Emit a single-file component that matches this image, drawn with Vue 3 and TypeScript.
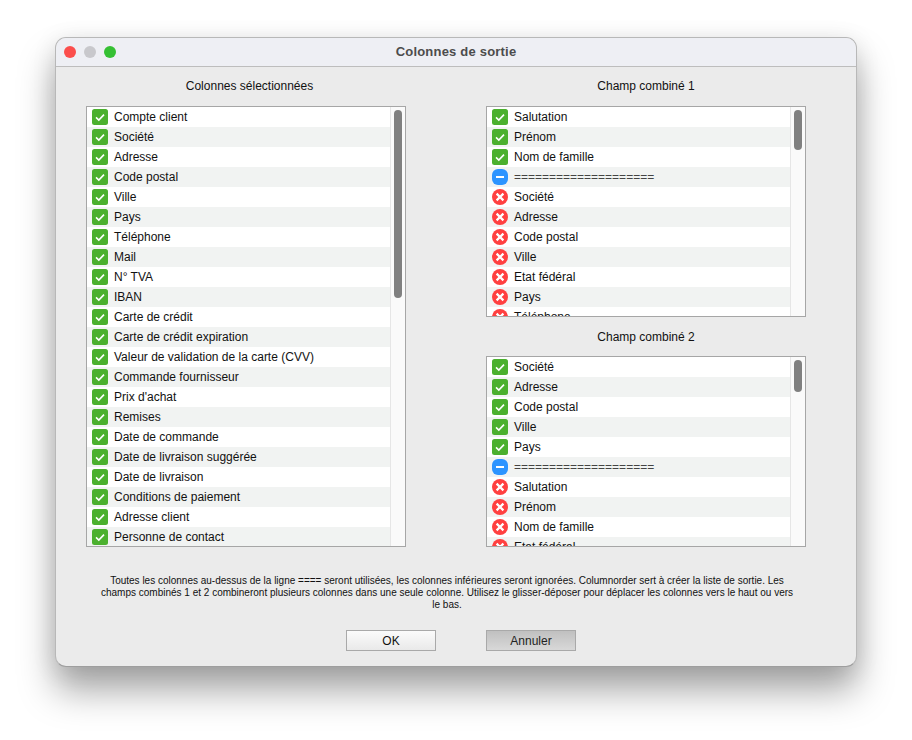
<script setup lang="ts">
type Kind = 'ok' | 'sep' | 'no'
interface Row { t: string; k: Kind }
const sep = '===================='
const mk = (k: Kind, items: string[]): Row[] => items.map((t) => ({ t, k }))
const left = mk('ok', ['Compte client', 'Société', 'Adresse', 'Code postal', 'Ville', 'Pays', 'Téléphone', 'Mail', 'N° TVA', 'IBAN', 'Carte de crédit', 'Carte de crédit expiration', 'Valeur de validation de la carte (CVV)', 'Commande fournisseur', "Prix d'achat", 'Remises', 'Date de commande', 'Date de livraison suggérée', 'Date de livraison', 'Conditions de paiement', 'Adresse client', 'Personne de contact'])
const c1 = [...mk('ok', ['Salutation', 'Prénom', 'Nom de famille']), { t: sep, k: 'sep' as Kind }, ...mk('no', ['Société', 'Adresse', 'Code postal', 'Ville', 'Etat fédéral', 'Pays', 'Téléphone'])]
const c2 = [...mk('ok', ['Société', 'Adresse', 'Code postal', 'Ville', 'Pays']), { t: sep, k: 'sep' as Kind }, ...mk('no', ['Salutation', 'Prénom', 'Nom de famille', 'Etat fédéral'])]
const lists = [
  { title: 'Champ combiné 1', rows: c1, cls: 'h1' },
  { title: 'Champ combiné 2', rows: c2, cls: 'h2' },
]
</script>

<template>
  <div class="page">
    <section class="win">
      <header class="bar">
        <div class="lights"><i class="r"></i><i class="g"></i><i class="v"></i></div>
        <h1>Colonnes de sortie</h1>
      </header>
      <main class="body">
        <div class="cols">
          <div class="col">
            <h2 class="lab shift">Colonnes sélectionnées</h2>
            <div class="list full">
              <div class="rows">
                <div v-for="r in left" :key="r.t" class="row">
                  <svg class="ic" viewBox="0 0 16 16"><rect width="16" height="16" rx="2.5" fill="#4bb02e"/><path d="M4 8.3l2.8 2.7L12 5.6" fill="none" stroke="#fff" stroke-width="1.6"/></svg>
                  <span>{{ r.t }}</span>
                </div>
              </div>
              <div class="track"><div class="thumb t-left"></div></div>
            </div>
          </div>
          <div class="col">
            <template v-for="l in lists" :key="l.title">
              <h2 class="lab" :class="l.cls === 'h2' ? 'second' : ''">{{ l.title }}</h2>
              <div class="list" :class="l.cls">
                <div class="rows">
                  <div v-for="r in l.rows" :key="r.t" class="row" :class="{ sep: r.k === 'sep' }">
                    <svg v-if="r.k === 'ok'" class="ic" viewBox="0 0 16 16"><rect width="16" height="16" rx="2.5" fill="#4bb02e"/><path d="M4 8.3l2.8 2.7L12 5.6" fill="none" stroke="#fff" stroke-width="1.6"/></svg>
                    <svg v-else-if="r.k === 'sep'" class="ic" viewBox="0 0 16 16"><rect width="16" height="16" rx="6" fill="#2c94ff"/><path d="M4 8h8" stroke="#fff" stroke-width="2"/></svg>
                    <svg v-else class="ic" viewBox="0 0 16 16"><circle cx="8" cy="8" r="8" fill="#ff4040"/><path d="M4.6 4.6l6.8 6.8M11.4 4.6l-6.8 6.8" stroke="#fff" stroke-width="2.2"/></svg>
                    <span>{{ r.t }}</span>
                  </div>
                </div>
                <div class="track"><div class="thumb" :class="l.cls === 'h1' ? 't-1' : 't-2'"></div></div>
              </div>
            </template>
          </div>
        </div>
        <p class="note">Toutes les colonnes au-dessus de la ligne ==== seront utilisées, les colonnes inférieures seront ignorées. Columnorder sert à créer la liste de sortie. Les champs combinés 1 et 2 combineront plusieurs colonnes dans une seule colonne. Utilisez le glisser-déposer pour déplacer les colonnes vers le haut ou vers le bas.</p>
        <div class="btns">
          <button class="btn ok">OK</button>
          <button class="btn cancel">Annuler</button>
        </div>
      </main>
    </section>
  </div>
</template>

<style>
html, body { margin: 0; background: #fff; overflow: hidden; }
</style>

<style scoped>
.page { width: 912px; height: 740px; box-sizing: border-box; padding: 37px 55px 0; font-family: "Liberation Sans", Arial, sans-serif; color: #111; }
.win { width: 802px; height: 630px; box-sizing: border-box; background: #ebebeb; border-radius: 11px; border: 1px solid #b8b8b8; border-bottom-color: #9e9e9e; box-shadow: 0 24px 36px rgba(0,0,0,.34), 0 4px 24px rgba(0,0,0,.1); overflow: hidden; display: flex; flex-direction: column; }
.bar { height: 29px; flex: none; box-sizing: border-box; padding-bottom: 1px; background: #eeeff4; border-bottom: 1px solid #bdbdbd; display: flex; align-items: center; justify-content: center; position: relative; }
.bar h1 { margin: 0; font-size: 13px; font-weight: 700; color: #4c4c4c; letter-spacing: .2px; }
.lights { position: absolute; left: 8px; top: 8px; display: flex; gap: 8px; }
.lights i { width: 12px; height: 12px; border-radius: 50%; display: block; }
.r { background: #fb4e4c; }
.g { background: #c8c8cc; }
.v { background: #35c033; }
.body { flex: 1; display: flex; flex-direction: column; padding: 0 50px 0 30px; }
.cols { display: flex; gap: 80px; }
.col { width: 320px; display: flex; flex-direction: column; }
.lab { margin: 0; height: 39px; line-height: 38px; font-size: 12px; font-weight: 400; text-align: center; color: #111; }
.shift { padding-left: 7px; }
.second { line-height: 41px; }
.list { box-sizing: border-box; border: 1px solid #a6a6a6; background: #fff; display: flex; overflow: hidden; }
.full { height: 441px; }
.h1 { height: 211px; }
.h2 { height: 191px; }
.rows { flex: 1; min-width: 0; overflow: hidden; }
.row { height: 20px; display: flex; align-items: center; gap: 6px; padding-left: 5px; font-size: 12px; color: #111; white-space: nowrap; }
.row:nth-child(even) { background: #f1f3f2; }
.sep span { color: #444; }
.ic { width: 16px; height: 16px; flex: none; }
.track { width: 15px; flex: none; background: #fafafa; border-left: 1px solid #e6e6e6; padding: 3px 3px 0; box-sizing: border-box; }
.thumb { width: 8px; border-radius: 4px; background: #808080; }
.t-left { height: 188px; }
.t-1 { height: 40px; }
.t-2 { height: 32px; }
.note { margin: 28px 0 0 2px; width: 696px; align-self: center; font-size: 10px; line-height: 12px; text-align: center; color: #111; }
.btns { display: flex; justify-content: center; gap: 50px; margin-top: 19px; padding-left: 30px; }
.btn { width: 90px; height: 21px; padding: 0; box-sizing: border-box; border: 1px solid #a9a9a9; font: 12px "Liberation Sans", Arial, sans-serif; color: #111; }
.ok { background: linear-gradient(#fbfbfb, #e9e9e9); }
.cancel { background: linear-gradient(#c0c0c0, #d8d8d8); color: #222; }
</style>
